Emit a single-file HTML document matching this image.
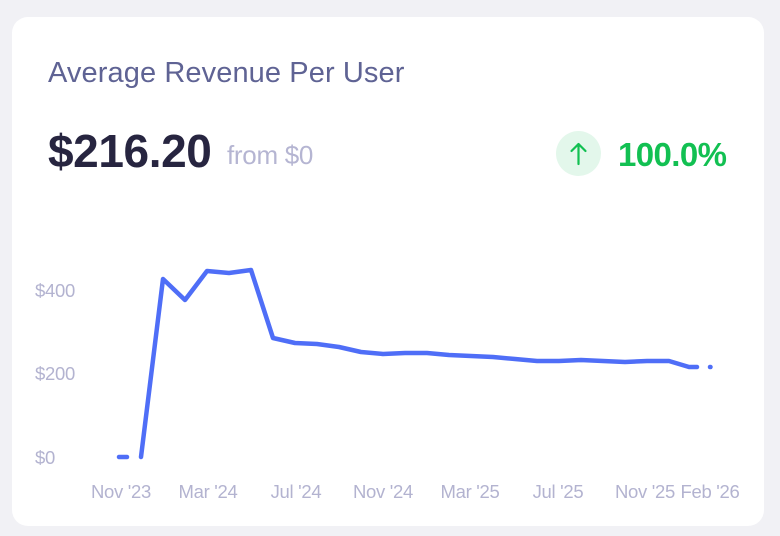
<!DOCTYPE html>
<html><head><style>
body{margin:0;width:780px;height:536px;background:#f1f1f5;font-family:"Liberation Sans",sans-serif;position:relative;overflow:hidden}
.card{position:absolute;left:12px;top:17px;width:752px;height:509px;background:#fff;border-radius:16px}
.t{position:absolute;left:48px;top:57px;font-size:29px;color:#5f6394;letter-spacing:0.1px}
.v{position:absolute;left:48px;top:124px;font-size:46px;font-weight:bold;color:#272540;letter-spacing:-0.4px}
.f{position:absolute;left:227px;top:140px;font-size:26px;color:#b5b5d2;letter-spacing:-0.3px}
.c{position:absolute;left:556px;top:131px;width:45px;height:45px;border-radius:50%;background:#e3f7eb}
.p{position:absolute;left:618px;top:136px;font-size:33px;font-weight:bold;color:#12c052;letter-spacing:-0.6px}
.a{font-size:18.5px;fill:#b3b3d0;font-family:"Liberation Sans",sans-serif;letter-spacing:-0.3px}
</style></head><body>
<div class="card"></div>
<div class="t">Average Revenue Per User</div>
<div class="v">$216.20</div>
<div class="f">from $0</div>
<div class="c"><svg width="45" height="45"><path d="M22.5 33V13M15.5 20l7-7 7 7" stroke="#12c052" stroke-width="2.2" fill="none" stroke-linecap="round" stroke-linejoin="round"/></svg></div>
<div class="p">100.0%</div>
<svg width="780" height="536" style="position:absolute;left:0;top:0">
<text class="a" x="35" y="297">$400</text>
<text class="a" x="35" y="380">$200</text>
<text class="a" x="35" y="464">$0</text>
<g class="a" text-anchor="middle">
<text x="121" y="498">Nov '23</text><text x="208" y="498">Mar '24</text><text x="296" y="498">Jul '24</text><text x="383" y="498">Nov '24</text><text x="470" y="498">Mar '25</text><text x="558" y="498">Jul '25</text><text x="645" y="498">Nov '25</text><text x="710" y="498">Feb '26</text>
</g>
<g stroke="#4f6ef7" stroke-width="4.5" fill="none" stroke-linecap="round" stroke-linejoin="round">
<path d="M119 457H127"/>
<path d="M141 457L163 279L185 300L207 271L229 273L251 270L273 338L295 343L317 344L339 347L361 352L383 354L405 353L427 353L449 355L471 356L493 357L515 359L537 361L559 361L581 360L603 361L625 362L647 361L669 361L689 367L697 367"/>
<path d="M710 367h0.5"/>
</g>
</svg>
</body></html>
